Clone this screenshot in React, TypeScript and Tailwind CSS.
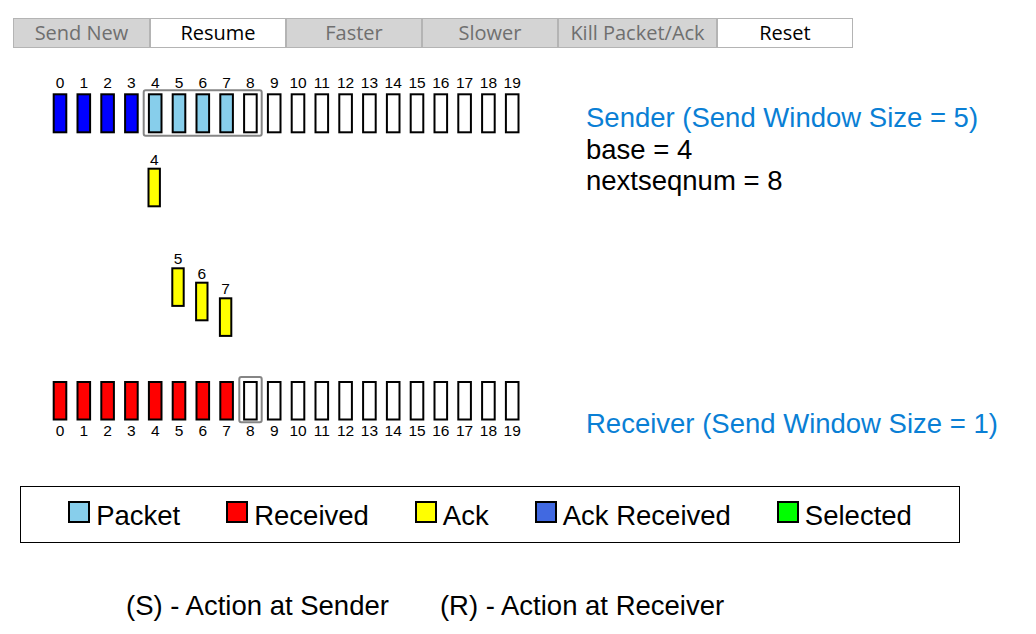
import React from 'react';

const PITCH = 23.8;
const X0 = 52.7;
const N = 20;

const senderFill = (i: number) => {
  if (i < 4) return '#0000ff';
  if (i < 8) return '#87ceeb';
  return '#ffffff';
};

const receiverFill = (i: number) => (i < 8 ? '#ff0000' : '#ffffff');

const acks = [
  { seq: 4, top: 167.7 },
  { seq: 5, top: 267.3 },
  { seq: 6, top: 281.7 },
  { seq: 7, top: 297.3 },
];

const buttons = [
  { label: 'Send New', width: 'w-[137px]', enabled: false },
  { label: 'Resume', width: 'w-[136px]', enabled: true },
  { label: 'Faster', width: 'w-[136px]', enabled: false },
  { label: 'Slower', width: 'w-[136px]', enabled: false },
  { label: 'Kill Packet/Ack', width: 'w-[159px]', enabled: false },
  { label: 'Reset', width: 'w-[136px]', enabled: true },
];

const legend = [
  { label: 'Packet', color: 'bg-[#87ceeb]' },
  { label: 'Received', color: 'bg-[#ff0000]' },
  { label: 'Ack', color: 'bg-[#ffff00]' },
  { label: 'Ack Received', color: 'bg-[#4169e1]' },
  { label: 'Selected', color: 'bg-[#00ff00]' },
];

function Diagram() {
  const xs = Array.from({ length: N }, (_, i) => X0 + PITCH * i);
  return (
    <svg width={574} height={400} className="shrink-0 block">
      <g
        transform="translate(0,-48)"
        fontFamily="'Liberation Sans', Arial, sans-serif"
        fontSize={15.5}
        fill="#000"
      >
        {/* sender row */}
        {xs.map((x, i) => (
          <g key={'s' + i}>
            <text x={x + 7.3} y={88} textAnchor="middle">
              {i}
            </text>
            <rect
              x={x + 1}
              y={94.3}
              width={12.6}
              height={38}
              fill={senderFill(i)}
              stroke="#000"
              strokeWidth={2}
            />
          </g>
        ))}
        <rect
          x={143.7}
          y={90.3}
          width={118}
          height={45.4}
          rx={2}
          fill="none"
          stroke="#858585"
          strokeWidth={2}
        />

        {/* acks in flight */}
        {acks.map((a) => {
          const x = X0 + PITCH * a.seq - 0.4;
          return (
            <g key={'a' + a.seq}>
              <text x={x + 6.7} y={a.top - 3} textAnchor="middle">
                {a.seq}
              </text>
              <rect
                x={x + 1}
                y={a.top + 1}
                width={11.4}
                height={37.6}
                fill="#ffff00"
                stroke="#000"
                strokeWidth={2}
              />
            </g>
          );
        })}

        {/* receiver row */}
        {xs.map((x, i) => (
          <g key={'r' + i}>
            <rect
              x={x + 1}
              y={382}
              width={12.6}
              height={37.5}
              fill={receiverFill(i)}
              stroke="#000"
              strokeWidth={2}
            />
            <text x={x + 7.3} y={436} textAnchor="middle">
              {i}
            </text>
          </g>
        ))}
        <rect
          x={239.3}
          y={377}
          width={22.4}
          height={45.3}
          rx={2}
          fill="none"
          stroke="#858585"
          strokeWidth={2}
        />
      </g>
    </svg>
  );
}

export default function App() {
  return (
    <div className="relative h-[634px] w-[1036px] overflow-hidden bg-white font-['Liberation_Sans',Arial,sans-serif] text-black">
      {/* controls */}
      <div className="flex pl-[13px] pt-[18px]">
        {buttons.map((b) => (
          <button
            key={b.label}
            className={`${b.width} h-[30px] shrink-0 border border-[#b4b4b4] font-['Open_Sans','Noto_Sans',sans-serif] text-[20px] leading-none ${
              b.enabled ? 'bg-white text-black' : 'bg-[#d4d4d4] text-[#6f6f6f]'
            }`}
          >
            {b.label}
          </button>
        ))}
      </div>

      {/* simulation */}
      <div className="flex">
        <Diagram />
        <div className="ml-[12px] flex flex-col text-[27.5px] leading-[31.6px]">
          <div className="pt-[54px] text-[#0a7fd5]">Sender (Send Window Size = 5)</div>
          <div>base = 4</div>
          <div>nextseqnum = 8</div>
          <div className="mt-[211px] text-[#0a7fd5]">Receiver (Send Window Size = 1)</div>
        </div>
      </div>

      {/* legend */}
      <div className="ml-[20px] mt-[38px] flex h-[57px] w-[940px] items-start justify-center gap-[46px] border-[1.5px] border-black pt-[13px] text-[27.5px] leading-[31.6px]">
        {legend.map((l) => (
          <div key={l.label} className="flex items-start gap-[6px]">
            <span className={`mt-[0.5px] block h-[22px] w-[22px] border-2 border-black ${l.color}`} />
            <span>{l.label}</span>
          </div>
        ))}
      </div>

      {/* footnote */}
      <div className="mt-[47px] flex gap-[51px] pl-[126px] text-[27.5px] leading-[31.6px]">
        <span>(S) - Action at Sender</span>
        <span>(R) - Action at Receiver</span>
      </div>
    </div>
  );
}
